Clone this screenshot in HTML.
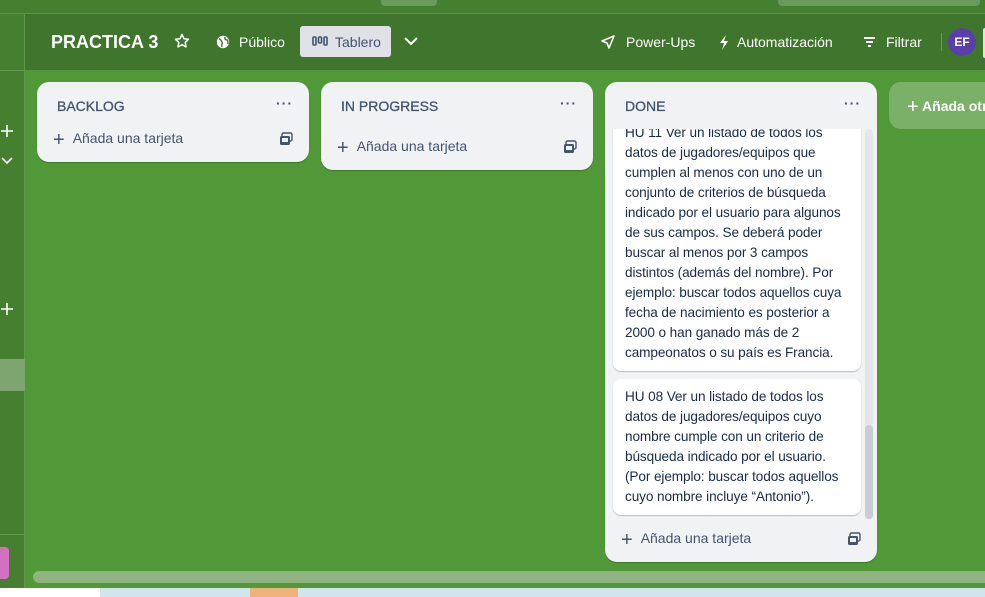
<!DOCTYPE html>
<html><head><meta charset="utf-8"><style>
*{box-sizing:border-box;margin:0;padding:0}
body{width:985px;height:597px;overflow:hidden;background:#519839;font-family:"Liberation Sans",sans-serif;position:relative;color:#172b4d}
.abs{position:absolute}
.top{left:0;top:0;width:985px;height:14px;background:#467f30;border-bottom:1px solid #5d9448}
.hdr{left:25px;top:14px;width:960px;height:56px;background:#3f752c}
.side{left:0;top:14px;width:25px;height:574px;background:#467f30;border-right:1px solid #5f9a4a}
.list{background:#f1f2f4;border-radius:12px;box-shadow:0 1px 1px rgba(0,0,0,.25)}
.title{font-size:14px;color:#44546f;position:absolute;left:20px;top:16px;-webkit-text-stroke:.3px #44546f}
.dots{position:absolute;right:16px;top:13px;font-size:14px;color:#44546f;letter-spacing:1px;font-weight:bold}
.add{position:absolute;left:16px;font-size:14px;color:#44546f}
.add b{font-weight:normal;font-size:20px;vertical-align:-3px;margin-right:8px}
.tpl{position:absolute;right:16px}
.card{position:absolute;left:8px;width:248px;background:#fff;border-radius:8px;box-shadow:0 1px 1px rgba(9,30,66,.25);font-size:13.6px;line-height:20px;color:#172b4d;padding:8px 12px;letter-spacing:-.1px}
.ht{color:#fff;font-size:14px;position:absolute;top:34px}
</style></head><body>
<div class="abs top"></div>
<div class="abs" style="left:381px;top:0;width:56px;height:6px;background:#6a9a5c;border-radius:0 0 4px 4px"></div>
<div class="abs" style="left:778px;top:0;width:202px;height:6px;background:#6a9a5c;border-radius:0 0 4px 4px"></div>
<div class="abs side"></div>
<div class="abs" style="left:0;top:70px;width:25px;height:1px;background:#5f9a4a"></div>
<svg class="abs" style="left:0;top:124px" width="14" height="14"><path d="M7 1v12M1 7h12" stroke="#fff" stroke-width="1.6"/></svg>
<svg class="abs" style="left:0;top:156px" width="14" height="10"><path d="M2 2l5 5 5-5" stroke="#fff" stroke-width="1.6" fill="none"/></svg>
<svg class="abs" style="left:0;top:302px" width="14" height="14"><path d="M7 1v12M1 7h12" stroke="#fff" stroke-width="1.6"/></svg>
<div class="abs" style="left:0;top:359px;width:25px;height:32px;background:#7ea56f"></div>
<div class="abs" style="left:0;top:534px;width:25px;height:1px;background:#5f9a4a"></div>
<div class="abs" style="left:0;top:547px;width:9px;height:32px;background:#d470c4;border-radius:0 4px 4px 0"></div>
<div class="abs hdr"></div>
<div class="abs" style="left:51px;top:32px;color:#fff;font-size:18px;font-weight:bold">PRACTICA 3</div>
<svg class="abs" style="left:174px;top:33px" width="16" height="16"><path d="M8 1.5l2 4.2 4.5.6-3.3 3.1.8 4.5L8 11.7l-4 2.2.8-4.5L1.5 6.3 6 5.7z" fill="none" stroke="#fff" stroke-width="1.5" stroke-linejoin="round"/></svg>
<svg class="abs" style="left:216px;top:35px" width="14" height="14"><circle cx="7" cy="7" r="6.2" fill="#fff"/><path d="M3 4c2 0 2 2 3 3s-1 3 0 5M9 2c-1 2 1 3 2 3s1 3 1 4" stroke="#3f752c" stroke-width="1.4" fill="none"/></svg>
<div class="ht" style="left:239px">Público</div>
<div class="abs" style="left:300px;top:26px;width:91px;height:31px;background:#dfe1e6;border-radius:3px"></div>
<svg class="abs" style="left:312px;top:36px" width="16" height="10"><rect x="1" y="1" width="3" height="8" rx="1" fill="none" stroke="#44546f" stroke-width="1.6"/><rect x="6.5" y="1" width="3" height="6" rx="1" fill="none" stroke="#44546f" stroke-width="1.6"/><rect x="12" y="1" width="3" height="8" rx="1" fill="none" stroke="#44546f" stroke-width="1.6"/></svg>
<div class="abs" style="left:335px;top:34px;font-size:14px;color:#44546f">Tablero</div>
<svg class="abs" style="left:403px;top:36px" width="16" height="10"><path d="M2 2l6 6 6-6" stroke="#fff" stroke-width="2" fill="none"/></svg>
<svg class="abs" style="left:601px;top:35px" width="14" height="14"><path d="M13 1L1 6l5 2 2 5z" fill="none" stroke="#fff" stroke-width="1.6" stroke-linejoin="round"/></svg>
<div class="ht" style="left:626px">Power-Ups</div>
<svg class="abs" style="left:718px;top:35px" width="12" height="15"><path d="M8 0L2 8h4l-2 7 6-9H6z" fill="#fff"/></svg>
<div class="ht" style="left:737px">Automatización</div>
<div class="abs" style="left:864px;top:37px;width:11px;height:2px;background:#fff"></div>
<div class="abs" style="left:866px;top:41px;width:7px;height:2px;background:#fff"></div>
<div class="abs" style="left:868px;top:45px;width:3px;height:2px;background:#fff"></div>
<div class="ht" style="left:886px">Filtrar</div>
<div class="abs" style="left:941px;top:33px;width:1px;height:18px;background:#6a9a5c"></div>
<div class="abs" style="left:948px;top:28px;width:28px;height:28px;border-radius:50%;background:#5a3fa8;color:#fff;font-size:12px;font-weight:bold;text-align:center;line-height:28px">EF</div>
<div class="abs" style="left:983px;top:28px;width:4px;height:30px;background:#dfe1e6;border-radius:3px"></div>

<div class="abs list" style="left:37px;top:82px;width:272px;height:80px">
<div class="title">BACKLOG</div><div class="dots">···</div>
<div class="add" style="top:47px"><b>+</b>Añada una tarjeta</div><svg class="tpl" style="top:50px" width="14" height="14"><rect x="3" y="1" width="10" height="8" rx="1.5" fill="none" stroke="#44546f" stroke-width="1.4"/><rect x="1" y="4" width="10" height="9" rx="1.5" fill="#44546f"/><rect x="3" y="6" width="6" height="4" fill="#f1f2f4"/></svg></div>

<div class="abs list" style="left:321px;top:82px;width:272px;height:88px">
<div class="title">IN PROGRESS</div><div class="dots">···</div>
<div class="add" style="top:55px"><b>+</b>Añada una tarjeta</div><svg class="tpl" style="top:58px" width="14" height="14"><rect x="3" y="1" width="10" height="8" rx="1.5" fill="none" stroke="#44546f" stroke-width="1.4"/><rect x="1" y="4" width="10" height="9" rx="1.5" fill="#44546f"/><rect x="3" y="6" width="6" height="4" fill="#f1f2f4"/></svg></div>

<div class="abs list" style="left:605px;top:82px;width:272px;height:480px;overflow:hidden">
<div class="title">DONE</div><div class="dots">···</div>
<div class="abs" style="left:0;top:47px;width:272px;height:390px;overflow:hidden">
<div class="card" style="top:-14px;height:256px">HU 11 Ver un listado de todos los datos de jugadores/equipos que cumplen al menos con uno de un conjunto de criterios de búsqueda indicado por el usuario para algunos de sus campos. Se deberá poder buscar al menos por 3 campos distintos (además del nombre). Por ejemplo: buscar todos aquellos cuya fecha de nacimiento es posterior a 2000 o han ganado más de 2 campeonatos o su país es Francia.</div>
<div class="card" style="top:250px;height:136px">HU 08 Ver un listado de todos los datos de jugadores/equipos cuyo nombre cumple con un criterio de búsqueda indicado por el usuario. (Por ejemplo: buscar todos aquellos cuyo nombre incluye “Antonio”).</div>
<div class="abs" style="left:260px;top:0;width:8px;height:390px;background:#e4e6ea;border-radius:4px"></div>
<div class="abs" style="left:260px;top:296px;width:8px;height:94px;background:#c8ccd3;border-radius:4px"></div>
</div>
<div class="add" style="top:447px"><b>+</b>Añada una tarjeta</div><svg class="tpl" style="top:450px" width="14" height="14"><rect x="3" y="1" width="10" height="8" rx="1.5" fill="none" stroke="#44546f" stroke-width="1.4"/><rect x="1" y="4" width="10" height="9" rx="1.5" fill="#44546f"/><rect x="3" y="6" width="6" height="4" fill="#f1f2f4"/></svg></div>

<div class="abs" style="left:889px;top:82px;width:110px;height:47px;background:#7bb069;border-radius:12px;color:#fff;font-size:14px;font-weight:bold;padding:14px 0 0 18px"><span style="font-size:20px;font-weight:normal;vertical-align:-2px">+</span> Añada otra</div>

<div class="abs" style="left:33px;top:571px;width:960px;height:12px;background:#8fb381;border-radius:6px"></div>
<div class="abs" style="left:0;top:588px;width:985px;height:9px;background:#d3e5ec"></div>
<div class="abs" style="left:0;top:588px;width:100px;height:9px;background:#fff"></div>
<div class="abs" style="left:250px;top:588px;width:48px;height:9px;background:#f0b27c"></div>
</body></html>
